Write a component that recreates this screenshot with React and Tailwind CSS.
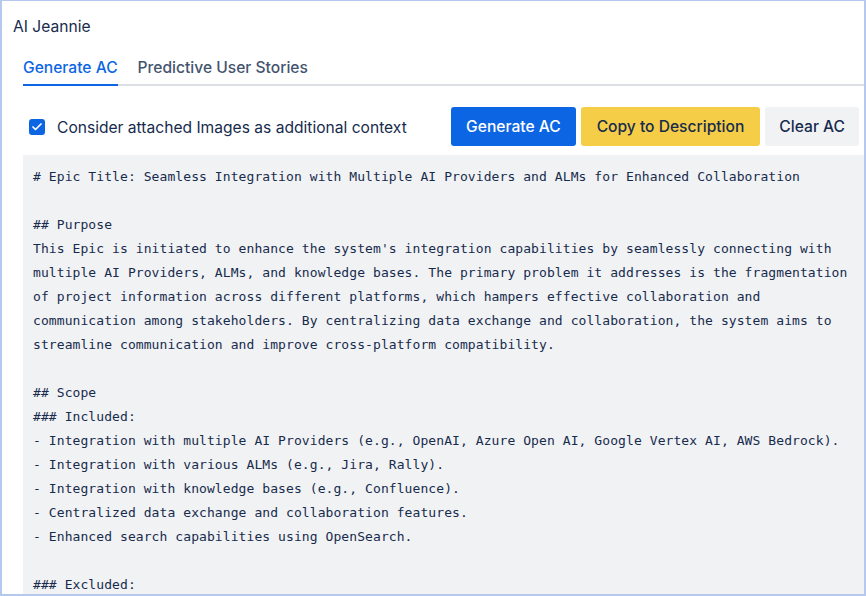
import { Check } from 'lucide-react';

const content = `# Epic Title: Seamless Integration with Multiple AI Providers and ALMs for Enhanced Collaboration

## Purpose
This Epic is initiated to enhance the system's integration capabilities by seamlessly connecting with
multiple AI Providers, ALMs, and knowledge bases. The primary problem it addresses is the fragmentation
of project information across different platforms, which hampers effective collaboration and
communication among stakeholders. By centralizing data exchange and collaboration, the system aims to
streamline communication and improve cross-platform compatibility.

## Scope
### Included:
- Integration with multiple AI Providers (e.g., OpenAI, Azure Open AI, Google Vertex AI, AWS Bedrock).
- Integration with various ALMs (e.g., Jira, Rally).
- Integration with knowledge bases (e.g., Confluence).
- Centralized data exchange and collaboration features.
- Enhanced search capabilities using OpenSearch.

### Excluded:`;

export default function App() {
    return (
        <div className="w-[866px] h-[596px] bg-white border-2 border-t border-[#b7c8ee] overflow-hidden font-['Inter','Noto_Sans',sans-serif] text-[#172b4d] flex flex-col">
            {/* Title */}
            <div className="pl-[11px] pt-[14px] text-[15.6px] leading-6">AI Jeannie</div>

            {/* Tabs */}
            <div className="ml-[21px] mt-4 flex gap-5 border-b-2 border-[#dcdfe4]">
                <button className="-mb-[2px] pt-[1px] pb-[4px] border-b-2 border-[#0c66e4] text-[15.6px] leading-6 font-medium text-[#0c66e4]">
                    Generate AC
                </button>
                <button className="-mb-[2px] pt-[1px] pb-[4px] border-b-2 border-transparent text-[15.6px] leading-6 font-medium text-[#44546f]">
                    Predictive User Stories
                </button>
            </div>

            {/* Toolbar */}
            <div className="ml-[21px] mt-[21px] pr-[5px] flex items-center justify-between">
                <label className="flex items-center gap-3 pl-[6px]">
                    <span className="w-4 h-4 rounded-[3px] bg-[#0c66e4] flex items-center justify-center">
                        <Check size={12} strokeWidth={3.5} className="text-white" />
                    </span>
                    <span className="text-[15.6px] leading-6 pt-[2px]">Consider attached Images as additional context</span>
                </label>
                <div className="flex gap-[5px]">
                    <button className="h-[39px] px-[15px] rounded-[3px] bg-[#0c66e4] text-white text-[15.6px] font-medium">
                        Generate AC
                    </button>
                    <button className="h-[39px] px-[16px] rounded-[3px] bg-[#f5cd47] text-[#172b4d] text-[15.6px] font-medium">
                        Copy to Description
                    </button>
                    <button className="h-[39px] px-[14px] rounded-[3px] bg-[#f1f2f4] text-[#172b4d] text-[15.6px] font-medium">
                        Clear AC
                    </button>
                </div>
            </div>

            {/* Generated content */}
            <div className="ml-[21px] mt-[9px] flex-1 bg-[#f1f2f4] pl-[10px] pt-[10px] overflow-hidden">
                <pre className="font-['DejaVu_Sans_Mono',monospace] text-[13px] leading-6 tracking-[0.08px] text-[#172b4d] whitespace-pre-wrap">
                    {content}
                </pre>
            </div>
        </div>
    );
}
